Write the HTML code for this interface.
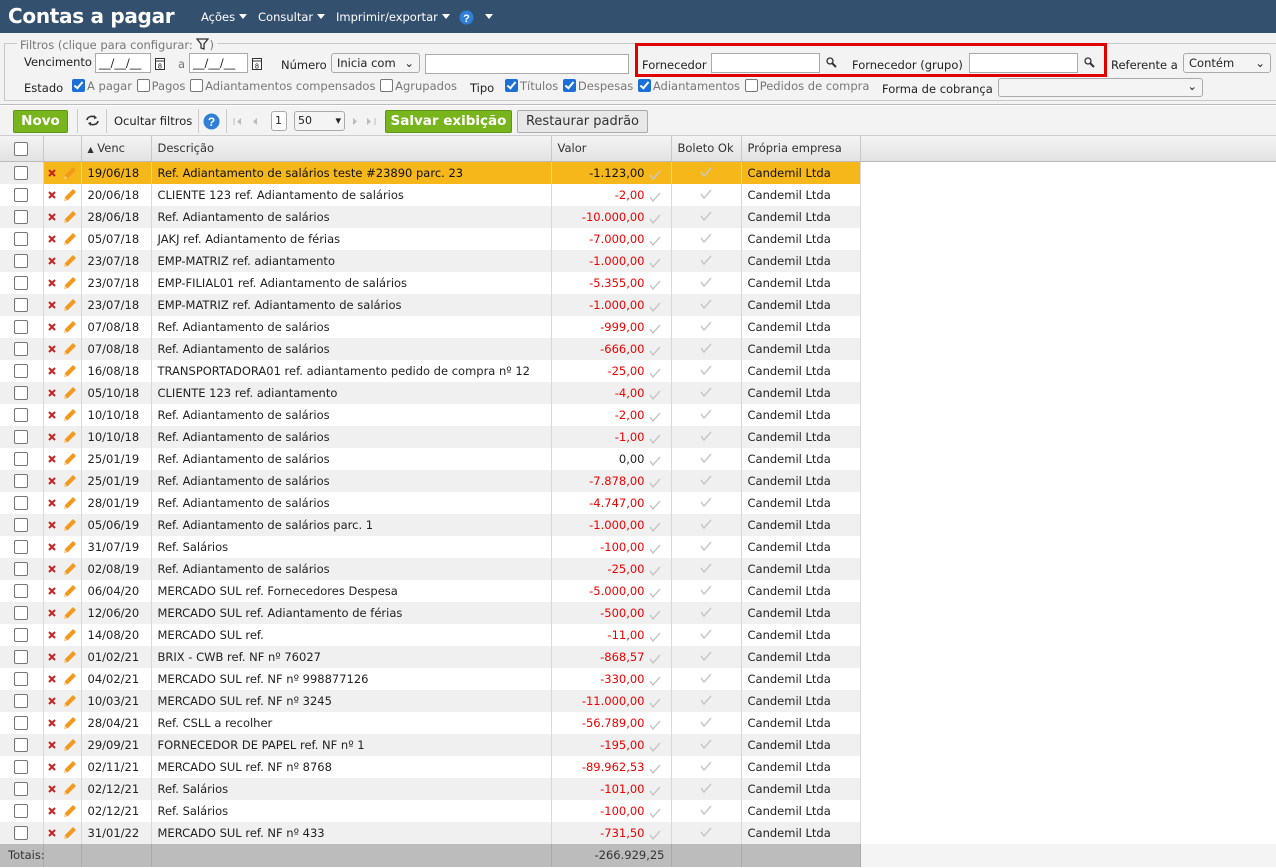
<!DOCTYPE html>
<html><head><meta charset="utf-8">
<style>
*{box-sizing:border-box;margin:0;padding:0}
body{width:1276px;height:868px;overflow:hidden;background:#fff;font-family:"DejaVu Sans","Liberation Sans",sans-serif;font-size:11.5px;color:#222;position:relative}
.hdr{position:absolute;left:0;top:0;width:1276px;height:33px;background:#34506f;color:#fff}
.hdr .t{position:absolute;left:8px;top:4px;font:bold 20px "DejaVu Sans","Liberation Sans",sans-serif;letter-spacing:-0.3px}
.hdr .m{position:absolute;top:10px;font-size:11.5px}
.tri{display:inline-block;width:0;height:0;border-left:4px solid transparent;border-right:4px solid transparent;border-top:5px solid #fff;vertical-align:2px;margin-left:4px}
.filt{position:absolute;left:0;top:33px;width:1276px;height:72px;background:#f3f3f3;border-bottom:1px solid #bbb}
.fs{position:absolute;left:4px;top:10px;width:1272px;height:58px;border:1px solid #c8c8c8;border-right:none}
.ab{position:absolute;white-space:nowrap;font-size:11.5px}
.inp{position:absolute;background:#fff;border:1px solid #aaa;height:20px}
.sel{position:absolute;background:#f4f4f4;border:1px solid #aaa;border-radius:3px;height:20px;font-size:11.5px;padding:2px 5px}
.cb{display:inline-block;width:13px;height:13px;border:1.5px solid #777;border-radius:2px;background:#fff;vertical-align:-2px;margin:0 2px 0 1px}
.cbc{display:inline-block;width:13px;height:13px;border-radius:2px;background:#1c6fd6;vertical-align:-2px;margin:0 2px 0 1px;position:relative}
.cbc:after{content:"";position:absolute;left:4px;top:1px;width:3px;height:7px;border:solid #fff;border-width:0 2px 2px 0;transform:rotate(40deg)}
.gr{color:#777}
.tb{position:absolute;left:0;top:106px;width:1276px;height:30px;background:#f3f3f3;border-bottom:1px solid #ccc}
.btn{position:absolute;border-radius:2px;font-weight:bold;color:#fff;background:#78b41c;border:1px solid #5e9613;font-size:13.5px;text-align:center}
.sep{position:absolute;top:3px;width:1px;height:24px;background:#ccc}
table{position:absolute;left:0;top:136px;border-collapse:collapse;table-layout:fixed;width:1276px}
td{height:22px;line-height:21px;padding-top:1px;border-right:1px solid #d8d8d8;padding-left:6px;padding-right:6px;white-space:nowrap;overflow:hidden;font-size:11.5px}
th{height:25px;background:linear-gradient(#f4f4f4,#e2e2e2);border-right:1px solid #c8c8c8;border-bottom:1px solid #bbb;font-weight:normal;text-align:left;padding:0 6px;color:#333;white-space:nowrap;font-size:11.5px}
tr.a td{background:#f0f0f0}
tr.s td{background:#f5b719;color:#111}
tr.s td.c0{background:#eee}
td.v{text-align:right;color:#e00;padding-right:26px;position:relative}
td.c0{text-align:center;padding:0}
.bx{display:inline-block;width:14px;height:14px;border:1.5px solid #777;border-radius:2px;background:#fff;vertical-align:middle}
.ck{position:absolute;right:10px;top:4px}
td.bo{text-align:center}
td.ic{padding:0 0 0 4px}
td.ic svg{vertical-align:middle}
.tot td{background:#bcbcbc;height:23px;color:#333;border-right:1px solid #aaa}
</style></head><body>
<div class="hdr"><div class="t">Contas a pagar</div>
<div class="m" style="left:201px">Ações<span class="tri"></span></div>
<div class="m" style="left:258px">Consultar<span class="tri"></span></div>
<div class="m" style="left:336px">Imprimir/exportar<span class="tri"></span></div>
<svg style="position:absolute;left:459px;top:10px" width="15" height="15"><circle cx="7.5" cy="7.5" r="7" fill="#2f7fd6"/><text x="7.5" y="12" font-size="11" font-weight="bold" fill="#fff" text-anchor="middle" font-family="Liberation Sans">?</text></svg>
<div class="m" style="left:481px"><span class="tri"></span></div>
</div>
<div class="filt">
<div class="fs"></div>
<div class="ab gr" style="left:17px;top:5px;background:#f3f3f3;padding:0 3px">Filtros (clique para configurar: <svg width="13" height="12" style="vertical-align:-1px"><path d="M1 1h11L8 6v5L5 10V6z" fill="none" stroke="#333" stroke-width="1.3"/></svg>)</div>
<div class="ab" style="left:24px;top:22px">Vencimento</div>
<div class="inp" style="left:95px;top:20px;width:56px;padding:2px 3px">__/__/__</div>
<svg style="position:absolute;left:155px;top:23px" width="10" height="14"><rect x="0.5" y="2.5" width="9" height="11" fill="#fff" stroke="#333"/><path d="M0 5h10" stroke="#333"/><text x="5" y="12.5" font-size="7" text-anchor="middle" font-family="Liberation Sans">8</text></svg>
<div class="ab gr" style="left:178px;top:24px">a</div>
<div class="inp" style="left:189px;top:20px;width:59px;padding:2px 3px">__/__/__</div>
<svg style="position:absolute;left:252px;top:23px" width="10" height="14"><rect x="0.5" y="2.5" width="9" height="11" fill="#fff" stroke="#333"/><path d="M0 5h10" stroke="#333"/><text x="5" y="12.5" font-size="7" text-anchor="middle" font-family="Liberation Sans">8</text></svg>
<div class="ab" style="left:281px;top:25px">Número</div>
<div class="sel" style="left:331px;top:20px;width:89px">Inicia com <span style="float:right">⌄</span></div>
<div class="inp" style="left:425px;top:21px;width:204px"></div>
<div style="position:absolute;left:635px;top:10px;width:472px;height:34px;border:3px solid #e00000"></div>
<div class="ab" style="left:642px;top:25px">Fornecedor</div>
<div class="inp" style="left:711px;top:20px;width:109px"></div>
<svg style="position:absolute;left:826px;top:24px" width="11" height="11"><circle cx="4" cy="4" r="3" fill="none" stroke="#333" stroke-width="1.3"/><path d="M6 6l4 4" stroke="#333" stroke-width="2"/></svg>
<div class="ab" style="left:852px;top:25px">Fornecedor (grupo)</div>
<div class="inp" style="left:969px;top:20px;width:109px"></div>
<svg style="position:absolute;left:1084px;top:24px" width="11" height="11"><circle cx="4" cy="4" r="3" fill="none" stroke="#333" stroke-width="1.3"/><path d="M6 6l4 4" stroke="#333" stroke-width="2"/></svg>
<div class="ab" style="left:1111px;top:25px">Referente a</div>
<div class="sel" style="left:1183px;top:20px;width:88px">Contém <span style="float:right">⌄</span></div>
<div class="ab" style="left:24px;top:48px">Estado</div>
<div class="ab gr" style="left:71px;top:46px"><span class="cbc"></span>A pagar <span class="cb"></span>Pagos <span class="cb"></span>Adiantamentos compensados <span class="cb"></span>Agrupados</div>
<div class="ab" style="left:470px;top:48px">Tipo</div>
<div class="ab gr" style="left:504px;top:46px"><span class="cbc"></span>Títulos <span class="cbc"></span>Despesas <span class="cbc"></span>Adiantamentos <span class="cb"></span>Pedidos de compra</div>
<div class="ab" style="left:882px;top:49px">Forma de cobrança</div>
<div class="sel" style="left:998px;top:45px;width:205px;height:19px;text-align:right;padding-top:0">⌄</div>
</div>
<div class="tb">
<div class="btn" style="left:13px;top:4px;width:55px;height:23px;line-height:21px">Novo</div>
<div class="sep" style="left:77px"></div>
<svg style="position:absolute;left:85px;top:8px" width="15" height="13"><path d="M2 6a5 4 0 0 1 9-2M13 7a5 4 0 0 1-9 2" fill="none" stroke="#333" stroke-width="1.6"/><path d="M9 1l3 3-3 1zM6 12l-3-3 3-1z" fill="#333"/></svg>
<div class="sep" style="left:106px"></div>
<div class="ab" style="left:114px;top:8px">Ocultar filtros</div>
<div class="sep" style="left:198px"></div>
<svg style="position:absolute;left:203px;top:7px" width="17" height="17"><circle cx="8.5" cy="8.5" r="8" fill="#2f7fd6"/><text x="8.5" y="13" font-size="12" font-weight="bold" fill="#fff" text-anchor="middle" font-family="Liberation Sans">?</text></svg>
<div class="sep" style="left:226px"></div>
<svg style="position:absolute;left:233px;top:11px" width="30" height="9"><path d="M1 1v7" stroke="#bbb"/><path d="M8 1L4 4.5 8 8zM24 1L20 4.5 24 8z" fill="#bbb"/></svg>
<div class="inp" style="left:271px;top:5px;width:16px;border-radius:3px;font-size:11px;padding:2px 3px">1</div>
<div class="sel" style="left:294px;top:5px;width:51px;font-size:11px;padding:2px 3px">50 <span style="float:right">▾</span></div>
<svg style="position:absolute;left:351px;top:11px" width="26" height="9"><path d="M2 1l4 3.5L2 8zM16 1l4 3.5L16 8z" fill="#bbb"/><path d="M24 1v7" stroke="#bbb"/></svg>
<div class="btn" style="left:385px;top:4px;width:127px;height:23px;line-height:21px">Salvar exibição</div>
<div class="btn" style="left:517px;top:4px;width:131px;height:23px;line-height:21px;background:#e8e8e8;border-color:#aaa;color:#333;font-weight:normal;font-size:13px">Restaurar padrão</div>
</div>
<table>
<colgroup><col style="width:43px"><col style="width:38px"><col style="width:70px"><col style="width:400px"><col style="width:120px"><col style="width:70px"><col style="width:119px"><col style="width:416px"></colgroup>
<tr><th style="text-align:center;padding:0"><span class="bx"></span></th><th></th><th><span style="font-size:8px">▲</span> Venc</th><th>Descrição</th><th>Valor</th><th>Boleto Ok</th><th>Própria empresa</th><th style="border-right:none"></th></tr>
<tbody id="b"></tbody>
<tr class="tot"><td style="text-align:left;padding-left:8px;overflow:visible">Totais:</td><td></td><td></td><td></td><td style="text-align:right;padding-right:6px">-266.929,25</td><td></td><td></td><td style="background:#f4f4f4;border:none"></td></tr>
</table>
<script>
var d=[["19/06/18","Ref. Adiantamento de salários teste #23890 parc. 23","-1.123,00"],["20/06/18","CLIENTE 123 ref. Adiantamento de salários","-2,00"],["28/06/18","Ref. Adiantamento de salários","-10.000,00"],["05/07/18","JAKJ ref. Adiantamento de férias","-7.000,00"],["23/07/18","EMP-MATRIZ ref. adiantamento","-1.000,00"],["23/07/18","EMP-FILIAL01 ref. Adiantamento de salários","-5.355,00"],["23/07/18","EMP-MATRIZ ref. Adiantamento de salários","-1.000,00"],["07/08/18","Ref. Adiantamento de salários","-999,00"],["07/08/18","Ref. Adiantamento de salários","-666,00"],["16/08/18","TRANSPORTADORA01 ref. adiantamento pedido de compra nº 12","-25,00"],["05/10/18","CLIENTE 123 ref. adiantamento","-4,00"],["10/10/18","Ref. Adiantamento de salários","-2,00"],["10/10/18","Ref. Adiantamento de salários","-1,00"],["25/01/19","Ref. Adiantamento de salários","0,00"],["25/01/19","Ref. Adiantamento de salários","-7.878,00"],["28/01/19","Ref. Adiantamento de salários","-4.747,00"],["05/06/19","Ref. Adiantamento de salários parc. 1","-1.000,00"],["31/07/19","Ref. Salários","-100,00"],["02/08/19","Ref. Adiantamento de salários","-25,00"],["06/04/20","MERCADO SUL ref. Fornecedores Despesa","-5.000,00"],["12/06/20","MERCADO SUL ref. Adiantamento de férias","-500,00"],["14/08/20","MERCADO SUL ref.","-11,00"],["01/02/21","BRIX - CWB ref. NF nº 76027","-868,57"],["04/02/21","MERCADO SUL ref. NF nº 998877126","-330,00"],["10/03/21","MERCADO SUL ref. NF nº 3245","-11.000,00"],["28/04/21","Ref. CSLL a recolher","-56.789,00"],["29/09/21","FORNECEDOR DE PAPEL ref. NF nº 1","-195,00"],["02/11/21","MERCADO SUL ref. NF nº 8768","-89.962,53"],["02/12/21","Ref. Salários","-101,00"],["02/12/21","Ref. Salários","-100,00"],["31/01/22","MERCADO SUL ref. NF nº 433","-731,50"]];
var ic='<svg width="8" height="8"><path d="M1 1l6 6M7 1L1 7" stroke="#c82222" stroke-width="2"/></svg> <svg width="14" height="14" style="margin-left:3px"><path d="M2 13l1-4 8-8 3 3-8 8z" fill="#f39a1e"/><path d="M2 13l1-3 2 2z" fill="#f7d9a0"/></svg>';
var ck='<svg width="12" height="10"><path d="M1 5l3 4 7-8" fill="none" stroke="#c8c8c8" stroke-width="1.5"/></svg>';
var h="";d.forEach(function(r,i){h+='<tr class="'+(i==0?'s':(i%2==1?'':'a'))+'"><td class="c0"><span class="bx"></span></td><td class="ic">'+ic+'</td><td>'+r[0]+'</td><td>'+r[1]+'</td><td class="v"'+(r[2]=="0,00"?' style="color:#222"':'')+'>'+r[2]+'<span class="ck">'+ck+'</span></td><td class="bo">'+ck+'</td><td>Candemil Ltda</td><td style="background:#fff;border:none"></td></tr>'});
document.getElementById("b").innerHTML=h;
</script>
</body></html>
